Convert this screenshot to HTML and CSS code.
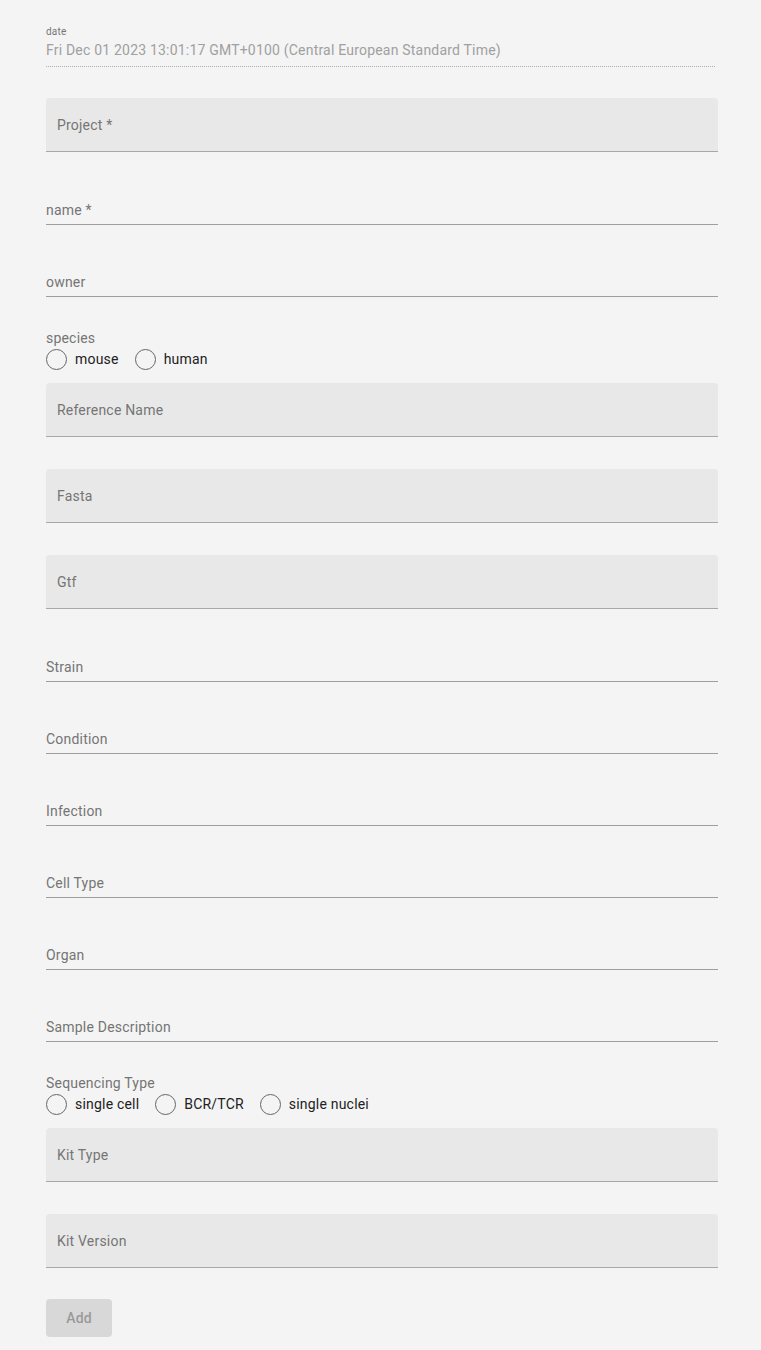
FILE: index.html
```html
<!DOCTYPE html>
<html lang="en">

<head>
    <meta charset="UTF-8">
    <meta name="viewport" content="width=device-width, initial-scale=1.0">
    <title>New Sample</title>
    <link rel="stylesheet" href="styles.css">
</head>

<body>
    <form class="sample-form">
        <!-- read only date -->
        <div class="date-field">
            <span class="date-label">date</span>
            <div class="date-value">Fri Dec 01 2023 13:01:17 GMT+0100 (Central European Standard Time)</div>
        </div>

        <div class="field filled"><span class="field-label">Project *</span></div>
        <div class="field"><span class="field-label">name *</span></div>
        <div class="field"><span class="field-label">owner</span></div>

        <div class="radio-group">
            <span class="group-label">species</span>
            <div class="radio-row">
                <label class="radio"><span class="circle"></span>mouse</label>
                <label class="radio"><span class="circle"></span>human</label>
            </div>
        </div>

        <div class="field filled"><span class="field-label">Reference Name</span></div>
        <div class="field filled"><span class="field-label">Fasta</span></div>
        <div class="field filled"><span class="field-label">Gtf</span></div>
        <div class="field"><span class="field-label">Strain</span></div>
        <div class="field"><span class="field-label">Condition</span></div>
        <div class="field"><span class="field-label">Infection</span></div>
        <div class="field"><span class="field-label">Cell Type</span></div>
        <div class="field"><span class="field-label">Organ</span></div>
        <div class="field"><span class="field-label">Sample Description</span></div>

        <div class="radio-group">
            <span class="group-label">Sequencing Type</span>
            <div class="radio-row">
                <label class="radio"><span class="circle"></span>single cell</label>
                <label class="radio"><span class="circle"></span>BCR/TCR</label>
                <label class="radio"><span class="circle"></span>single nuclei</label>
            </div>
        </div>

        <div class="field filled"><span class="field-label">Kit Type</span></div>
        <div class="field filled last"><span class="field-label">Kit Version</span></div>

        <button type="button" class="add-btn" disabled>Add</button>
    </form>
</body>

</html>
```

FILE: styles.css
```css
* {
    margin: 0;
    padding: 0;
    box-sizing: border-box;
    font-family: Roboto, 'Liberation Sans', sans-serif;
}

body {
    background-color: #f4f4f4;
    color: #212121;
    font-size: 14px;
    letter-spacing: 0.2px;
}

.sample-form {
    display: flex;
    flex-direction: column;
    width: 672px;
    margin-left: 46px;
    padding-top: 26px;
}

/* Date (read only) */
.date-label {
    display: block;
    font-size: 10px;
    line-height: 12px;
    color: #757575;
}

.date-value {
    margin-top: 2px;
    font-size: 14px;
    line-height: 20px;
    color: #a0a0a0;
    padding-bottom: 6px;
    border-bottom: 1px dotted #b0b0b0;
    margin-right: 3px;
}

.date-field {
    margin-bottom: 31px;
}

/* Text fields */
.field {
    height: 41px;
    padding-top: 18px;
    border-bottom: 1px solid #9e9e9e;
    margin-bottom: 31px;
}

.field-label {
    display: block;
    line-height: 16px;
    color: #757575;
}

.field.filled {
    height: 54px;
    padding: 19px 11px 0;
    background: #e8e8e8;
    border-radius: 4px 4px 0 0;
    border-bottom-color: #a8a8a8;
    margin-bottom: 32px;
}

.field.last {
    margin-bottom: 31px;
}

/* Radio groups */
.radio-group {
    margin-top: 1px;
    margin-bottom: 12px;
}

.group-label {
    display: block;
    line-height: 18px;
    color: #757575;
}

.radio-row {
    display: flex;
    align-items: center;
    gap: 16px;
    height: 24px;
}

.radio {
    display: flex;
    align-items: center;
    gap: 8px;
    color: #212121;
}

.circle {
    width: 21px;
    height: 21px;
    border: 1.5px solid #666;
    border-radius: 50%;
}

/* Submit */
.add-btn {
    width: 66px;
    height: 38px;
    border: none;
    border-radius: 4px;
    background: #d8d8d8;
    color: #9a9a9a;
    font-size: 14px;
    font-weight: 500;
    letter-spacing: 0.2px;
}
```
